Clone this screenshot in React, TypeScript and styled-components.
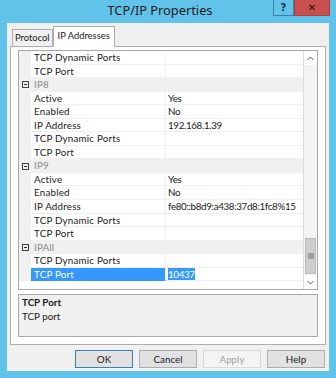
import styled, { createGlobalStyle } from "styled-components";

const GlobalStyle = createGlobalStyle`
  html, body {
    margin: 0;
    padding: 0;
    background: #62c3ea;
  }
  body {
    font-family: Lato, "Noto Sans", sans-serif;
  }
`;

const Frame = styled.div`
  width: 336px;
  height: 378px;
  box-sizing: border-box;
  background: #62c3ea;
  padding: 0 7px 7px 7px;
  display: flex;
  flex-direction: column;
`;

const TitleBar = styled.div`
  height: 23px;
  display: grid;
  grid-template-columns: 1fr auto 1fr;
  align-items: start;
`;

const Title = styled.div`
  grid-column: 2;
  font-family: "Noto Sans", sans-serif;
  font-size: 12.8px;
  color: #1a1a1a;
  line-height: 21px;
  margin-right: 16px;
`;

const Caption = styled.div`
  grid-column: 3;
  justify-self: end;
  display: flex;
  margin-right: -1px;
`;

const CaptionButton = styled.div<{ close?: boolean }>`
  width: ${(p) => (p.close ? 36 : 21)}px;
  height: 16px;
  box-sizing: border-box;
  display: flex;
  align-items: center;
  justify-content: center;
  font-family: "DejaVu Sans", sans-serif;
  font-weight: bold;
  font-size: 10px;
  color: ${(p) => (p.close ? "#2a0c0c" : "#1c2f45")};
  background: ${(p) => (p.close ? "#c7504f" : "#62c3ea")};
  border: 1px solid ${(p) => (p.close ? "#b04040" : "#3a7fa0")};
  border-top: none;
`;

const Client = styled.div`
  flex: 1;
  background: #f0f0f0;
  display: flex;
  flex-direction: column;
  padding: 2px 3px 0 3px;
`;

const TabStrip = styled.div`
  display: flex;
  align-items: flex-end;
  height: 21px;
  padding-left: 2px;
  position: relative;
  z-index: 1;
`;

const Tab = styled.div<{ active?: boolean }>`
  box-sizing: border-box;
  height: ${(p) => (p.active ? 21 : 17)}px;
  padding: 0 ${(p) => (p.active ? 4 : 2)}px;
  font-size: 9.4px;
  line-height: ${(p) => (p.active ? 18 : 16)}px;
  color: #1a1a1a;
  background: ${(p) => (p.active ? "#ffffff" : "#f0f0f0")};
  border: 1px solid #adadad;
  border-bottom: ${(p) => (p.active ? "1px solid #ffffff" : "none")};
  margin-bottom: ${(p) => (p.active ? -1 : 0)}px;
`;

const Panel = styled.div`
  background: #ffffff;
  border: 1px solid #adadad;
  height: 299px;
  box-sizing: border-box;
  padding: 3px 7px 0 7px;
  display: flex;
  flex-direction: column;
  gap: 4px;
`;

const Grid = styled.div`
  height: 240px;
  flex-shrink: 0;
  box-sizing: border-box;
  border: 1px solid #a9a9a9;
  display: flex;
  background: #ffffff;
`;

const Rows = styled.div`
  flex: 1;
  display: flex;
  flex-direction: column;
`;

const Row = styled.div<{ category?: boolean }>`
  height: 13.56px;
  flex-shrink: 0;
  display: grid;
  grid-template-columns: 12px 135px 1fr;
  background: ${(p) => (p.category ? "#f0f0f0" : "#ffffff")};
  font-size: 9.8px;
  line-height: 12.5px;
`;

const Gutter = styled.div`
  background: #f0f0f0;
  display: flex;
  align-items: center;
  justify-content: center;
`;

const Expander = styled.div`
  width: 7px;
  height: 7px;
  box-sizing: border-box;
  border: 1px solid #404040;
  display: flex;
  align-items: center;
  justify-content: center;
  &::after {
    content: "";
    width: 3px;
    height: 1px;
    background: #303030;
  }
`;

const Name = styled.div<{ selected?: boolean; category?: boolean }>`
  padding-left: 3px;
  white-space: nowrap;
  letter-spacing: 0.2px;
  color: ${(p) => (p.selected ? "#ffffff" : p.category ? "#8a8a8a" : "#1a1a1a")};
  background: ${(p) => (p.selected ? "#3399ff" : "transparent")};
  border-bottom: 1px solid ${(p) => (p.selected ? "#3399ff" : "#f0f0f0")};
  border-right: 1px solid #f0f0f0;
  box-sizing: border-box;
`;

const Value = styled.div`
  padding-left: 2px;
  white-space: nowrap;
  letter-spacing: -0.35px;
  color: #1a1a1a;
  border-bottom: 1px solid #f0f0f0;
  box-sizing: border-box;
`;

const ValueMark = styled.span`
  background: #3399ff;
  color: #ffffff;
`;

const ScrollBar = styled.div`
  width: 13px;
  border-left: 1px solid #dcdcdc;
  background: #f4f4f4;
  display: flex;
  flex-direction: column;
`;

const ScrollArrow = styled.div`
  height: 14px;
  display: flex;
  align-items: center;
  justify-content: center;
  background: #ffffff;
`;

const Track = styled.div`
  flex: 1;
  display: flex;
  flex-direction: column;
  justify-content: flex-end;
  padding-bottom: 1px;
`;

const Thumb = styled.div`
  height: 34px;
  margin: 0 1px;
  background: #cdcdcd;
  border: 1px solid #bcbcbc;
  display: flex;
  align-items: center;
  justify-content: center;
`;

const Description = styled.div`
  height: 43px;
  flex-shrink: 0;
  box-sizing: border-box;
  border: 1px solid #a9a9a9;
  background: #f0f0f0;
  padding: 1px 3px;
  font-size: 9.8px;
  line-height: 13.5px;
  color: #1a1a1a;
`;

const DescTitle = styled.div`
  font-weight: bold;
`;

const ButtonRow = styled.div`
  display: flex;
  justify-content: flex-end;
  gap: 6px;
  padding: 5px 1px 0 0;
`;

const Button = styled.div<{ disabled?: boolean; primary?: boolean }>`
  width: 58px;
  height: 18px;
  box-sizing: border-box;
  display: flex;
  align-items: center;
  justify-content: center;
  font-size: 9.8px;
  color: ${(p) => (p.disabled ? "#a0a0a0" : "#1a1a1a")};
  background: ${(p) => (p.disabled ? "#f4f4f4" : "#e1e1e1")};
  border: 1px solid
    ${(p) => (p.primary ? "#3c7fb1" : p.disabled ? "#d9d9d9" : "#adadad")};
`;

type Item =
  | { cat: string }
  | { name: string; value?: string; selected?: boolean };

const items: Item[] = [
  { name: "TCP Dynamic Ports" },
  { name: "TCP Port" },
  { cat: "IP8" },
  { name: "Active", value: "Yes" },
  { name: "Enabled", value: "No" },
  { name: "IP Address", value: "192.168.1.39" },
  { name: "TCP Dynamic Ports" },
  { name: "TCP Port" },
  { cat: "IP9" },
  { name: "Active", value: "Yes" },
  { name: "Enabled", value: "No" },
  { name: "IP Address", value: "fe80::b8d9:a438:37d8:1fc8%15" },
  { name: "TCP Dynamic Ports" },
  { name: "TCP Port" },
  { cat: "IPAll" },
  { name: "TCP Dynamic Ports" },
  { name: "TCP Port", value: "10437", selected: true },
];

const Chevron = ({ up }: { up?: boolean }) => (
  <svg width="7" height="5" viewBox="0 0 7 5">
    <path
      d={up ? "M0.5 4 L3.5 1 L6.5 4" : "M0.5 1 L3.5 4 L6.5 1"}
      fill="none"
      stroke="#606060"
      strokeWidth="1"
    />
  </svg>
);

const Grip = () => (
  <svg width="6" height="6" viewBox="0 0 6 6">
    <path d="M0 1h6M0 3h6M0 5h6" stroke="#707070" strokeWidth="1" />
  </svg>
);

function App() {
  return (
    <>
      <GlobalStyle />
      <Frame>
        <TitleBar>
          <Title>TCP/IP Properties</Title>
          <Caption>
            <CaptionButton>?</CaptionButton>
            <CaptionButton close>✕</CaptionButton>
          </Caption>
        </TitleBar>
        <Client>
          <TabStrip>
            <Tab>Protocol</Tab>
            <Tab active>IP Addresses</Tab>
          </TabStrip>
          <Panel>
            <Grid>
              <Rows>
                {items.map((it, i) =>
                  "cat" in it ? (
                    <Row key={i} category>
                      <Gutter>
                        <Expander />
                      </Gutter>
                      <Name category>{it.cat}</Name>
                      <Value />
                    </Row>
                  ) : (
                    <Row key={i}>
                      <Gutter />
                      <Name selected={it.selected}>{it.name}</Name>
                      <Value>
                        {it.selected ? (
                          <ValueMark>{it.value}</ValueMark>
                        ) : (
                          it.value
                        )}
                      </Value>
                    </Row>
                  )
                )}
              </Rows>
              <ScrollBar>
                <ScrollArrow>
                  <Chevron up />
                </ScrollArrow>
                <Track>
                  <Thumb>
                    <Grip />
                  </Thumb>
                </Track>
                <ScrollArrow>
                  <Chevron />
                </ScrollArrow>
              </ScrollBar>
            </Grid>
            <Description>
              <DescTitle>TCP Port</DescTitle>
              <div>TCP port</div>
            </Description>
          </Panel>
          <ButtonRow>
            <Button primary>OK</Button>
            <Button>Cancel</Button>
            <Button disabled>Apply</Button>
            <Button>Help</Button>
          </ButtonRow>
        </Client>
      </Frame>
    </>
  );
}

export default App;
